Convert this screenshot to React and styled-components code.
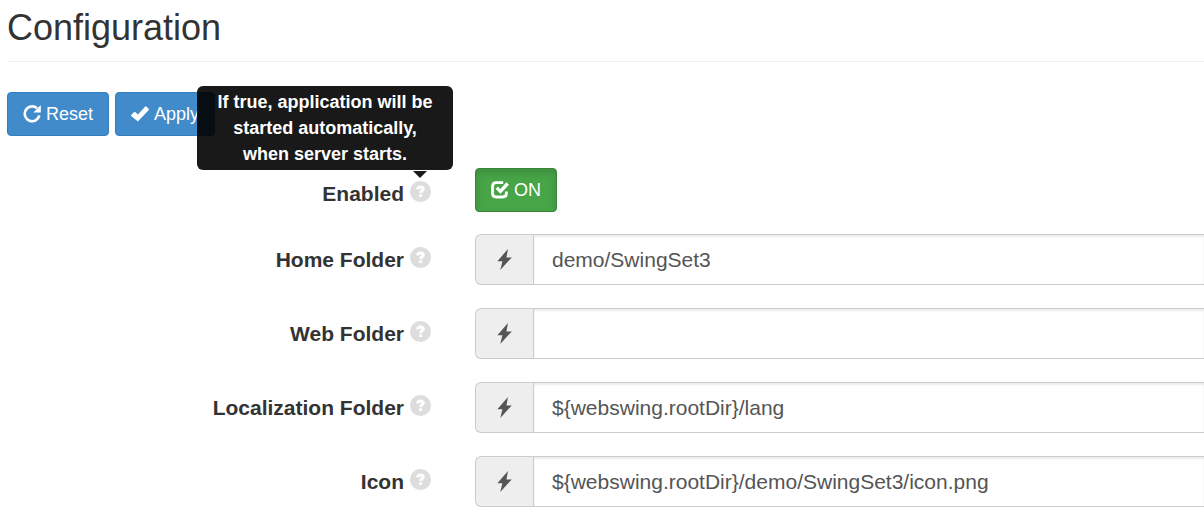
import React, { useState } from "react";
import styled, { createGlobalStyle } from "styled-components";

const GlobalStyle = createGlobalStyle`
  *, *::before, *::after { box-sizing: border-box; }
  body {
    margin: 0;
    overflow-x: hidden;
    background: #fff;
    color: #333;
    font: 21px/30px "Liberation Sans", Arial, sans-serif;
  }
`;

const Page = styled.main`
  padding: 4px 0 16px 7px;
`;

const Title = styled.h1`
  margin: 0;
  padding: 4px 0 13px;
  border-bottom: 1px solid #eee;
  font-size: 36px;
  line-height: 40px;
  font-weight: 400;
`;

const Toolbar = styled.div`
  display: flex;
  gap: 6px;
  margin: 30px 0 32px;
`;

const Button = styled.button`
  display: inline-flex;
  align-items: center;
  gap: 5px;
  height: 44px;
  padding: 0 15px;
  border: 1px solid ${(p) => (p.$on ? "#398439" : "#357ebd")};
  border-radius: 4px;
  background: ${(p) => (p.$on ? "#47a447" : "#428bca")};
  box-shadow: ${(p) => (p.$on ? "inset 0 4px 7px rgba(0, 0, 0, 0.13)" : "none")};
  color: #fff;
  font: inherit;
  font-size: 18px;
  line-height: 26px;
  cursor: pointer;
`;

const Icon = styled.svg`
  display: block;
  flex: none;
  fill: currentColor;
`;

const Form = styled.form`
  display: grid;
  gap: 22px;
`;

const Fields = styled.div`
  display: grid;
  gap: 23px;
`;

const Row = styled.div`
  display: grid;
  grid-template-columns: 424px minmax(0, 1fr);
  column-gap: 44px;
  align-items: start;
`;

const LabelCell = styled.div`
  display: flex;
  justify-content: flex-end;
  gap: 6px;
  padding-top: 11px;
`;

const Label = styled.label`
  font-weight: 700;
`;

const Help = styled.button`
  position: relative;
  align-self: flex-start;
  display: block;
  margin-top: 2px;
  padding: 0;
  border: 0;
  background: none;
  color: #ddd;
  cursor: help;
`;

const Tooltip = styled.span`
  position: absolute;
  right: -22px;
  bottom: calc(100% + 11px);
  width: 256px;
  padding: 3px 12px;
  border-radius: 6px;
  background: rgba(0, 0, 0, 0.9);
  color: #fff;
  font: 700 18px/26px "Liberation Sans", Arial, sans-serif;
  text-align: center;

  &::after {
    content: "";
    position: absolute;
    top: calc(100% + 1px);
    right: 26px;
    border: 7px solid transparent;
    border-top-color: rgba(0, 0, 0, 0.9);
    border-bottom: 0;
  }
`;

const InputGroup = styled.div`
  display: flex;
  height: 51px;
`;

const Addon = styled.button`
  display: flex;
  align-items: center;
  justify-content: center;
  flex: none;
  width: 58px;
  padding: 0;
  border: 1px solid #ccc;
  border-right: 0;
  border-radius: 6px 0 0 6px;
  background: #eee;
  color: #555;
  cursor: pointer;
`;

const Input = styled.input`
  flex: 1;
  min-width: 0;
  padding: 0 18px;
  border: 1px solid #ccc;
  border-right: 0;
  border-radius: 0;
  background: #fff;
  box-shadow: inset 0 2px 2px rgba(0, 0, 0, 0.08);
  color: #555;
  font: inherit;
`;

const RepeatIcon = () => (
  <Icon width="18" height="18" viewBox="0 0 18 18" aria-hidden="true">
    <path d="M14 3.2A7.4 7.4 0 1 0 16.4 10.4" fill="none" stroke="currentColor" strokeWidth="2.6" />
    <path d="M17.8 0v7.4h-7.4z" />
  </Icon>
);

const OkIcon = () => (
  <Icon width="18" height="18" viewBox="0 0 18 18" aria-hidden="true">
    <path d="M.2 9.9l3-3q.5-.5 1 0l2.7 2.6 7.4-7.9q.5-.5 1 0l2.5 2.3q.5.5 0 1L7.3 16.1q-.5.5-1 0L.2 10.9q-.4-.5 0-1z" />
  </Icon>
);

const CheckIcon = () => (
  <Icon width="18" height="18" viewBox="0 0 18 18" aria-hidden="true">
    <path
      d="M12.2 1.6H5.4Q1.5 1.6 1.5 5.4v6.8Q1.5 16 5.4 16h6.2q3.8 0 3.8-3.8v-1.8"
      fill="none"
      stroke="currentColor"
      strokeWidth="2.8"
    />
    <path d="M4.6 7.9l2.3-2.3 2.5 2.3 6-6.6 2.6 2.4-8.5 9z" />
  </Icon>
);

const QuestionIcon = () => (
  <Icon width="21" height="21" viewBox="0 0 21 21" aria-hidden="true">
    <circle cx="10.5" cy="10.5" r="10.5" />
    <path d="M7.6 8.4Q7.8 6 10.5 6T13.2 8.1Q13.2 9 12 9.8T10.7 12.2" fill="none" stroke="#fff" strokeWidth="3.1" />
    <path d="M9.1 13.3h3.1v2.7H9.1z" fill="#fff" />
  </Icon>
);

const FlashIcon = () => (
  <Icon width="15" height="21" viewBox="0 0 15 21" aria-hidden="true">
    <path d="M11 0L.4 12.2h5L3.3 21 14.8 8.4H9.4z" />
  </Icon>
);

const fields = [
  { id: "home-folder", label: "Home Folder", value: "demo/SwingSet3" },
  { id: "web-folder", label: "Web Folder", value: "" },
  { id: "localization-folder", label: "Localization Folder", value: "${webswing.rootDir}/lang" },
  { id: "icon", label: "Icon", value: "${webswing.rootDir}/demo/SwingSet3/icon.png" },
];

function FieldLabel({ id, text, tooltip }) {
  return (
    <LabelCell>
      <Label htmlFor={id}>{text}</Label>
      <Help type="button" aria-label={`Help for ${text}`}>
        <QuestionIcon />
        {tooltip && <Tooltip role="tooltip">{tooltip}</Tooltip>}
      </Help>
    </LabelCell>
  );
}

export default function App() {
  const [enabled, setEnabled] = useState(true);

  return (
    <>
      <GlobalStyle />
      <Page>
        <Title>Configuration</Title>
        <Toolbar>
          <Button type="button"><RepeatIcon />Reset</Button>
          <Button type="button"><OkIcon />Apply</Button>
        </Toolbar>
        <Form>
          <Row>
            <FieldLabel
              id="enabled"
              text="Enabled"
              tooltip="If true, application will be started automatically, when server starts."
            />
            <div>
              <Button
                id="enabled"
                type="button"
                $on={enabled}
                aria-pressed={enabled}
                onClick={() => setEnabled(!enabled)}
              >
                <CheckIcon />{enabled ? "ON" : "OFF"}
              </Button>
            </div>
          </Row>
          <Fields>
            {fields.map((f) => (
              <Row key={f.id}>
                <FieldLabel id={f.id} text={f.label} />
                <InputGroup>
                  <Addon type="button" aria-label={`Insert variable into ${f.label}`}><FlashIcon /></Addon>
                  <Input id={f.id} type="text" defaultValue={f.value} />
                </InputGroup>
              </Row>
            ))}
          </Fields>
        </Form>
      </Page>
    </>
  );
}
